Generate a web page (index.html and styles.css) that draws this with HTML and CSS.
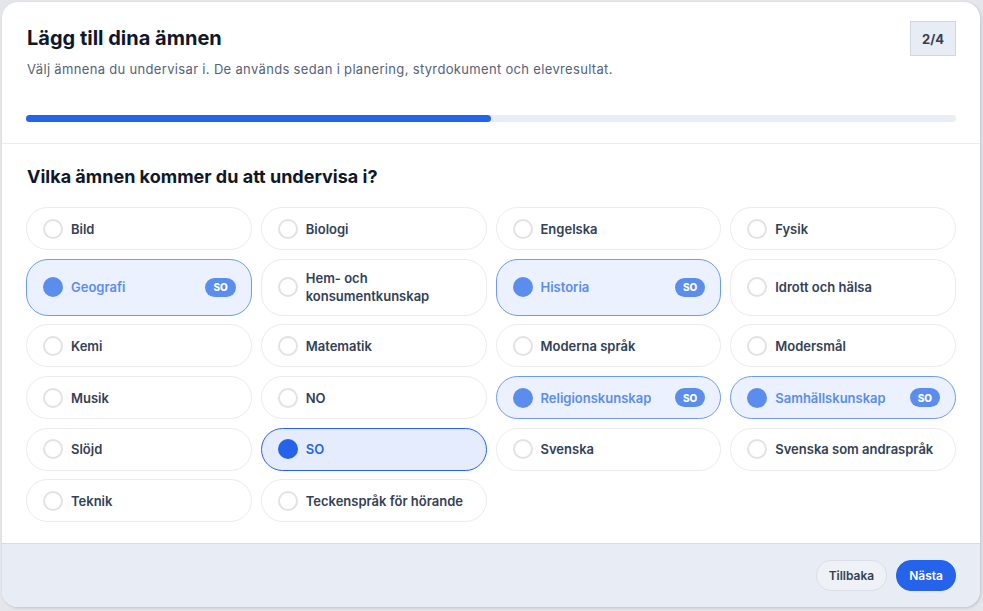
FILE: index.html
```html
<!DOCTYPE html>
<html lang="sv">
<head>
    <meta charset="UTF-8">
    <meta name="viewport" content="width=device-width, initial-scale=1.0">
    <title>Lägg till dina ämnen</title>
    <link rel="stylesheet" href="styles.css">
</head>
<body>
    <div class="modal">
        <header class="modal-head">
            <div class="head-row">
                <div>
                    <h1>Lägg till dina ämnen</h1>
                    <p class="lead">Välj ämnena du undervisar i. De används sedan i planering, styrdokument och elevresultat.</p>
                </div>
                <span class="step">2/4</span>
            </div>
            <div class="progress"><div class="progress-fill" style="width: 50%"></div></div>
        </header>

        <section class="modal-body">
            <h2>Vilka ämnen kommer du att undervisa i?</h2>
            <div class="subjects">
                <label class="subject"><span class="radio"></span><span class="name">Bild</span></label>
                <label class="subject"><span class="radio"></span><span class="name">Biologi</span></label>
                <label class="subject"><span class="radio"></span><span class="name">Engelska</span></label>
                <label class="subject"><span class="radio"></span><span class="name">Fysik</span></label>

                <label class="subject implied"><span class="radio"></span><span class="name">Geografi</span><span class="tag">SO</span></label>
                <label class="subject"><span class="radio"></span><span class="name">Hem- och<br>konsumentkunskap</span></label>
                <label class="subject implied"><span class="radio"></span><span class="name">Historia</span><span class="tag">SO</span></label>
                <label class="subject"><span class="radio"></span><span class="name">Idrott och hälsa</span></label>

                <label class="subject"><span class="radio"></span><span class="name">Kemi</span></label>
                <label class="subject"><span class="radio"></span><span class="name">Matematik</span></label>
                <label class="subject"><span class="radio"></span><span class="name">Moderna språk</span></label>
                <label class="subject"><span class="radio"></span><span class="name">Modersmål</span></label>

                <label class="subject"><span class="radio"></span><span class="name">Musik</span></label>
                <label class="subject"><span class="radio"></span><span class="name">NO</span></label>
                <label class="subject implied"><span class="radio"></span><span class="name">Religionskunskap</span><span class="tag">SO</span></label>
                <label class="subject implied"><span class="radio"></span><span class="name">Samhällskunskap</span><span class="tag">SO</span></label>

                <label class="subject"><span class="radio"></span><span class="name">Slöjd</span></label>
                <label class="subject selected"><span class="radio"></span><span class="name">SO</span></label>
                <label class="subject"><span class="radio"></span><span class="name">Svenska</span></label>
                <label class="subject"><span class="radio"></span><span class="name">Svenska som andraspråk</span></label>

                <label class="subject"><span class="radio"></span><span class="name">Teknik</span></label>
                <label class="subject"><span class="radio"></span><span class="name">Teckenspråk för hörande</span></label>
            </div>
        </section>

        <footer class="modal-foot">
            <button class="btn btn-ghost">Tillbaka</button>
            <button class="btn btn-primary">Nästa</button>
        </footer>
    </div>
</body>
</html>
```

FILE: styles.css
```css
body {
    font-family: Inter, "Noto Sans", sans-serif;
    margin: 0;
    padding: 2px 3px 4px 2px;
    background-color: #e4e6eb;
    color: #0f172a;
}
.modal {
    height: 605px;
    background-color: #fff;
    border-radius: 16px;
    box-shadow: 1px 1px 3px rgba(15, 23, 42, 0.18);
    display: flex;
    flex-direction: column;
    overflow: hidden;
}
.modal-head {
    padding: 19px 24px 21px;
    border-bottom: 1px solid #e9ecf1;
}
.head-row {
    display: flex;
    justify-content: space-between;
    align-items: flex-start;
}
h1 {
    margin: 4px 0 0 1px;
    font-size: 20px;
    line-height: 26px;
    font-weight: 700;
}
.lead {
    margin: 9px 0 0 1px;
    font-size: 13px;
    line-height: 18px;
    letter-spacing: 0.33px;
    color: #54627a;
}
.step {
    width: 44px;
    height: 33px;
    display: flex;
    align-items: center;
    justify-content: center;
    background-color: #e8ecf4;
    border: 1px solid #cfd6e1;
    font-size: 13px;
    font-weight: 700;
    color: #334155;
}
.progress {
    margin-top: 37px;
    height: 7px;
    border-radius: 4px;
    background-color: #e8edf6;
}
.progress-fill {
    height: 100%;
    border-radius: 4px;
    background-color: #2563eb;
}
.modal-body {
    flex: 1;
    padding: 21px 24px;
}
h2 {
    margin: 0 0 18px 1px;
    font-size: 18px;
    line-height: 24px;
    font-weight: 700;
}
.subjects {
    display: grid;
    grid-template-columns: repeat(4, 1fr);
    gap: 8.7px 9px;
}
.subject {
    box-sizing: border-box;
    min-height: 43px;
    padding: 9.5px 15px 9.5px 16px;
    display: flex;
    align-items: center;
    gap: 8px;
    border: 1px solid #ebebeb;
    border-radius: 22px;
    font-size: 13px;
    line-height: 18px;
    font-weight: 600;
    color: #334155;
    cursor: pointer;
}
.radio {
    box-sizing: border-box;
    flex: none;
    width: 20px;
    height: 20px;
    border: 2px solid #e2e2e2;
    border-radius: 50%;
}
.name {
    flex: 1;
}
.tag {
    padding: 0 8px;
    height: 19px;
    display: flex;
    align-items: center;
    border-radius: 10px;
    background-color: #5b8def;
    color: #fff;
    font-size: 10px;
    font-weight: 800;
}
.subject.implied {
    background-color: #ebf1fe;
    border-color: #6d9bf1;
    color: #5b8def;
}
.subject.implied .radio {
    border: none;
    background-color: #5b8def;
}
.subject.selected {
    background-color: #e5ecfd;
    border-color: #2563eb;
    color: #2563eb;
}
.subject.selected .radio {
    border: none;
    background-color: #2563eb;
}
.modal-foot {
    padding: 16px 24px 17px;
    display: flex;
    justify-content: flex-end;
    gap: 9px;
    background-color: #e8ecf4;
    border-top: 1px solid #d6dbe4;
}
.btn {
    font-family: inherit;
    font-size: 12px;
    line-height: 15px;
    font-weight: 600;
    padding: 7px 12px;
    border-radius: 15px;
    cursor: pointer;
}
.btn-ghost {
    background-color: #eef1f6;
    border: 1px solid #d9dee7;
    color: #334155;
}
.btn-primary {
    background-color: #2563eb;
    border: 1px solid #2563eb;
    color: #fff;
}
```
